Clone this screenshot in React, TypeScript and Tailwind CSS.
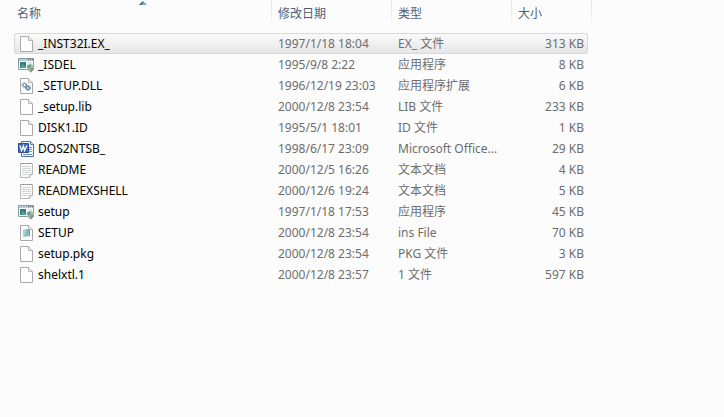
type IconKind = 'blank' | 'app' | 'dll' | 'word' | 'text' | 'ini'

type FileRow = {
  name: string
  date: string
  type: string
  size: string
  icon: IconKind
}

const files: FileRow[] = [
  { name: '_INST32I.EX_', date: '1997/1/18 18:04', type: 'EX_ 文件', size: '313 KB', icon: 'blank' },
  { name: '_ISDEL', date: '1995/9/8 2:22', type: '应用程序', size: '8 KB', icon: 'app' },
  { name: '_SETUP.DLL', date: '1996/12/19 23:03', type: '应用程序扩展', size: '6 KB', icon: 'dll' },
  { name: '_setup.lib', date: '2000/12/8 23:54', type: 'LIB 文件', size: '233 KB', icon: 'blank' },
  { name: 'DISK1.ID', date: '1995/5/1 18:01', type: 'ID 文件', size: '1 KB', icon: 'blank' },
  { name: 'DOS2NTSB_', date: '1998/6/17 23:09', type: 'Microsoft Office...', size: '29 KB', icon: 'word' },
  { name: 'README', date: '2000/12/5 16:26', type: '文本文档', size: '4 KB', icon: 'text' },
  { name: 'READMEXSHELL', date: '2000/12/6 19:24', type: '文本文档', size: '5 KB', icon: 'text' },
  { name: 'setup', date: '1997/1/18 17:53', type: '应用程序', size: '45 KB', icon: 'app' },
  { name: 'SETUP', date: '2000/12/8 23:54', type: 'ins File', size: '70 KB', icon: 'ini' },
  { name: 'setup.pkg', date: '2000/12/8 23:54', type: 'PKG 文件', size: '3 KB', icon: 'blank' },
  { name: 'shelxtl.1', date: '2000/12/8 23:57', type: '1 文件', size: '597 KB', icon: 'blank' },
]

const columns = ['名称', '修改日期', '类型', '大小']

function Page() {
  return (
    <>
      <path d="M2.5.5h8l4 4v11h-12z" fill="#fdfdfd" stroke="#a9a9a9" />
      <path d="M10.5.5v4h4" fill="#eee" stroke="#b5b5b5" />
    </>
  )
}

function FileIcon({ kind }: { kind: IconKind }) {
  return (
    <svg className="h-4 w-4 shrink-0" viewBox="0 0 16 16" fill="none" aria-hidden="true">
      {kind === 'blank' && <Page />}
      {kind === 'app' && (
        <>
          <path d="M.5 1.5h15v11H.5z" fill="#f8fbfb" stroke="#8b9a9e" />
          <path d="M1 2h14v2H1z" fill="#b3cdd1" />
          <path d="M10 2h1v1h-1zM12 2h1v1h-1zM14 2h1v1h-1z" fill="#476267" />
          <path d="M2 5h6v6H2z" fill="#347f83" />
          <path d="M3 9l2-2 3 3v1H3z" fill="#4ca37a" />
          <path d="M10 6h4" stroke="#c5d2d4" />
          <path d="M9 8.5L12.5 7 16 8.5c0 3.5-1 5.5-3.5 7C10 14 9 12 9 8.5z" fill="#a5bba9" />
          <path d="M12.5 7v4H9.2L9 8.5zM12.5 11h3.2c-.4 2.200-1.500 3.500-3.200 4.500z" fill="#759b8d" />
        </>
      )}
      {kind === 'dll' && (
        <>
          <Page />
          <circle cx="6.5" cy="7" r="1.5" stroke="#5e87a6" />
          <circle cx="6.5" cy="7" r="2.5" stroke="#6a93aa" strokeDasharray="1 .6" />
          <circle cx="10" cy="10" r="1.5" fill="#f3f8fa" stroke="#3f6f94" />
          <circle cx="10" cy="10" r="2.5" stroke="#4c7a9b" strokeDasharray="1 .6" />
        </>
      )}
      {kind === 'word' && (
        <>
          <path d="M3.5.5h9l3 3v12h-12z" fill="#f5f9ff" stroke="#4f73ab" />
          <path d="M12.5.5v3h3" fill="#cbdcf2" stroke="#5576a8" />
          <path d="M11 6.5h3M11 8.5h3M11 10.5h3M5 13.5h9" stroke="#7798c7" />
          <path d="M.5 2.5h10v9H.5z" fill="#3f6bb3" stroke="#2b4f92" />
          <path d="M2 4.5l1.500 5 2-4.500 1 4.500L9 4.500" stroke="#fff" strokeWidth="1.3" />
        </>
      )}
      {kind === 'text' && (
        <>
          <path d="M2.5 1.5h12v11l-3 3h-9z" fill="#fafafa" stroke="#b8b8b8" />
          <path d="M3 1.5h12" stroke="#858585" strokeDasharray="1 1" />
          <path d="M4 4.5h9M4 6.5h9M4 8.5h9M4 10.5h9M4 12.5h6" stroke="#d2d5d6" />
          <path d="M11.5 15.5v-3h3" fill="#fff" stroke="#b0b0b0" />
        </>
      )}
      {kind === 'ini' && (
        <>
          <Page />
          <path d="M5 5l5-1 1 7-6 1z" fill="#83bdc2" />
          <path d="M5 5l3-.6L6 12l-1 .1z" fill="#a9d5d6" />
          <path d="M10 4l2 1v6l-1 .5z" fill="#639ca5" />
        </>
      )}
    </svg>
  )
}

function SortArrow() {
  return (
    <svg className="absolute inset-x-0 top-0 mx-auto h-1.5 w-2" viewBox="0 0 8 6" aria-hidden="true">
      <path d="M0 5l4-4 4 4z" fill="#7fa3bd" />
      <path d="M0 5l4-4v2L2 5z" fill="#3c5e78" />
    </svg>
  )
}

export default function App() {
  return (
    <main className="min-h-screen bg-[#fcfcfc] pl-3.5 font-['Noto_Sans','Noto_Sans_CJK_SC',sans-serif] text-xs text-[#6d6d6d]">
      <table className="table-fixed border-separate border-spacing-0">
        <colgroup>
          <col className="w-[258px]" />
          <col className="w-[120px]" />
          <col className="w-[120px]" />
          <col className="w-[76px]" />
          <col className="w-1" />
        </colgroup>
        <thead>
          <tr>
            {columns.map((label, i) => (
              <th
                key={label}
                scope="col"
                colSpan={i === 3 ? 2 : 1}
                aria-sort={i === 0 ? 'ascending' : undefined}
                className="relative h-[33px] p-0 text-left align-top font-normal text-[#4c607a]"
              >
                <button className={`flex h-[22px] w-full justify-between text-left ${i === 0 ? 'pl-[3px]' : 'pl-1.5'}`}>
                  <span className="pt-1.5 leading-4">{label}</span>
                  <span className="h-full w-px bg-linear-to-b from-[#e2e6ea] to-[#f0f2f4]" />
                </button>
                {i === 0 && <SortArrow />}
              </th>
            ))}
          </tr>
        </thead>
        <tbody className="[&_td]:h-[21px] [&_td]:border-y [&_td]:border-transparent [&_td]:py-0 [&_td]:leading-4 [&_td]:whitespace-nowrap">
          {files.map((file, i) => (
            <tr
              key={file.name}
              aria-selected={i === 0}
              className={
                i === 0
                  ? '[&>td]:border-[#d9d9d9]! [&>td]:bg-linear-to-b [&>td]:from-[#fafafa] [&>td]:to-[#e6e6e6] [&>td:first-child]:rounded-l-[3px] [&>td:last-child]:rounded-r-[3px]'
                  : ''
              }
            >
              <td className="border-l pr-2 pl-[3px] text-black">
                <span className="flex items-center gap-1">
                  <FileIcon kind={file.icon} />
                  {file.name}
                </span>
              </td>
              <td className="pl-1.5">{file.date}</td>
              <td className="pl-1.5">{file.type}</td>
              <td className="border-r pr-[3px] text-right">{file.size}</td>
            </tr>
          ))}
        </tbody>
      </table>
    </main>
  )
}
